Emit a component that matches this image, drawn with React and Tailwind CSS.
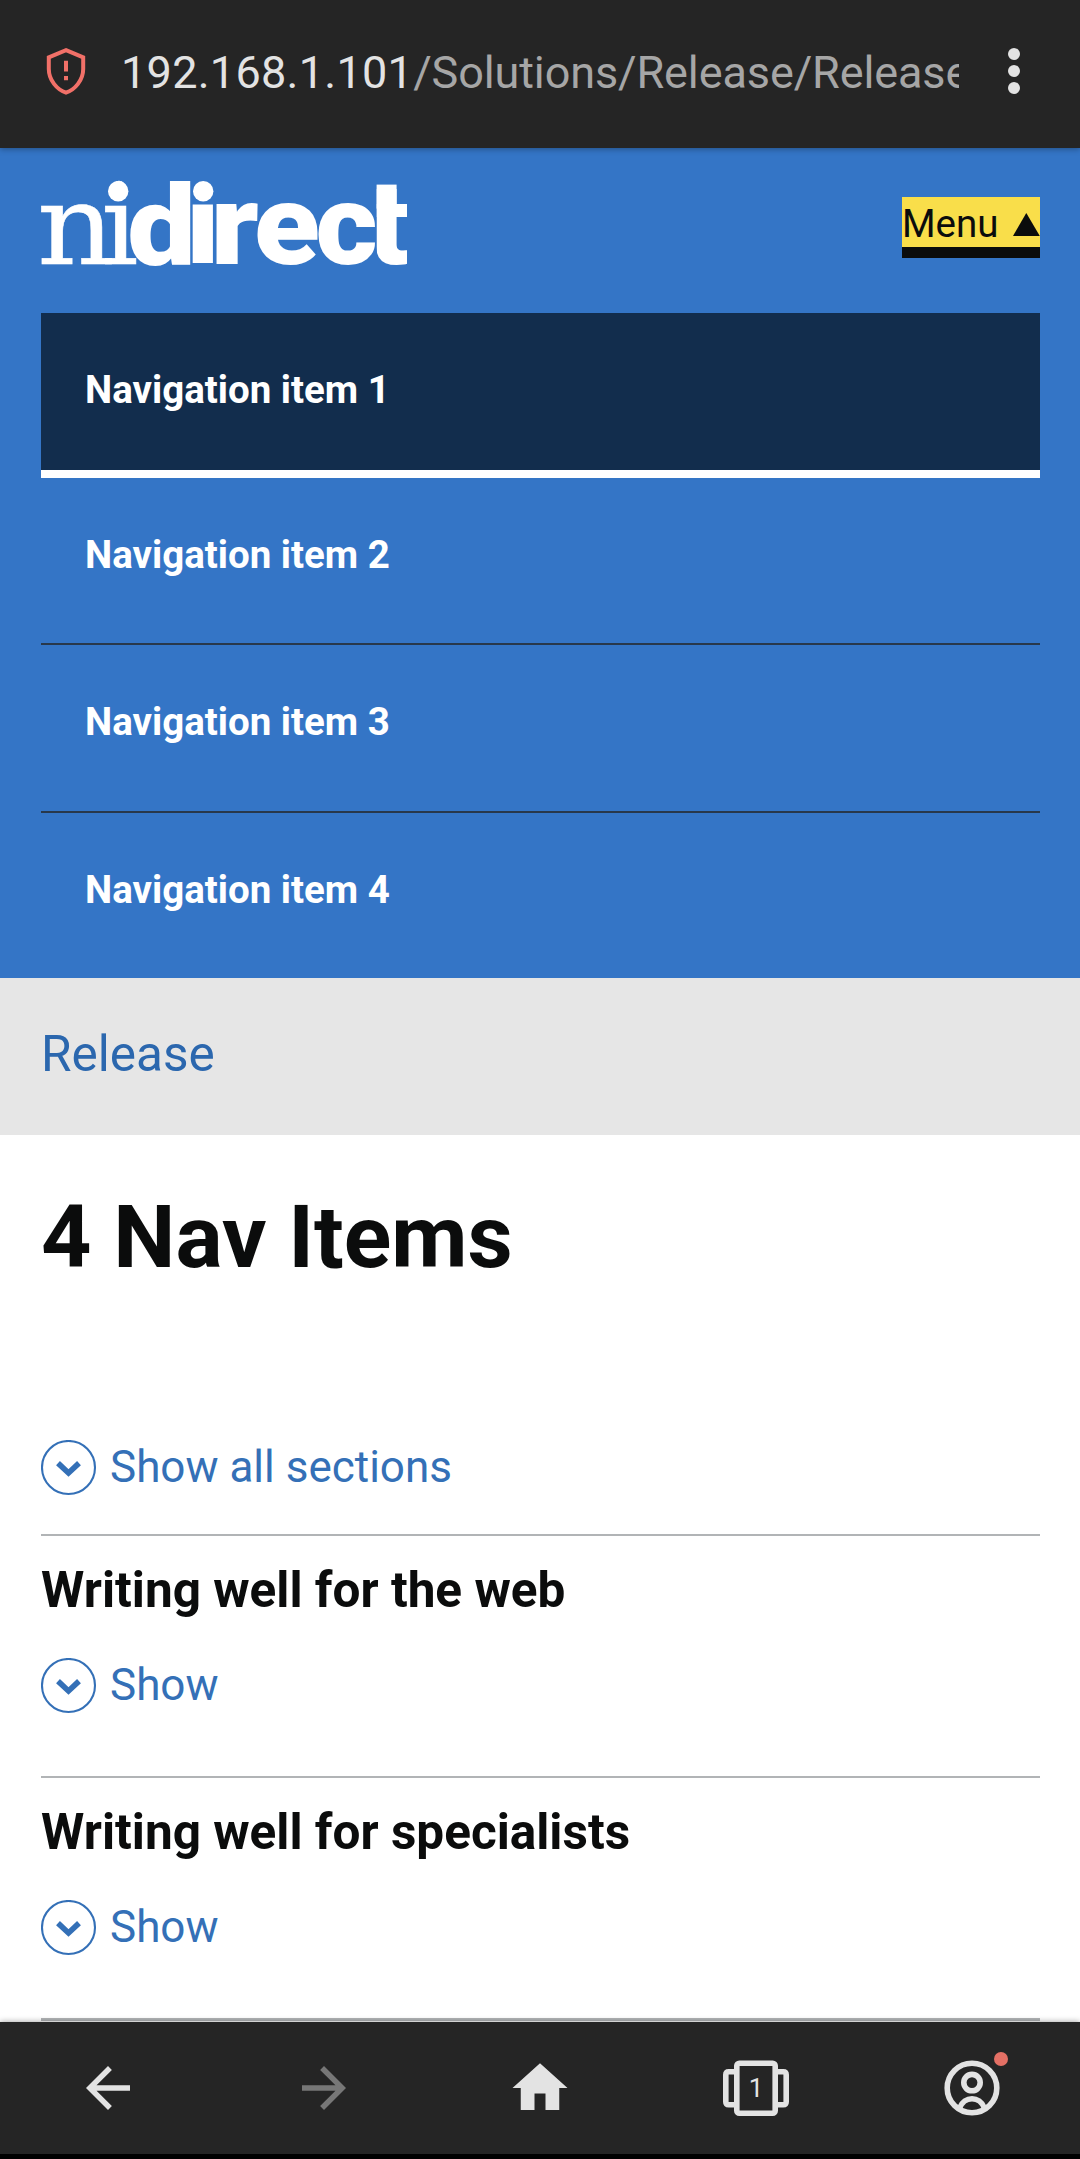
const navItems = ["Navigation item 1", "Navigation item 2", "Navigation item 3", "Navigation item 4"];

const sections = ["Writing well for the web", "Writing well for specialists"];

function ShieldIcon() {
  return (
    <svg className="block h-[66px] w-[66px] shrink-0" viewBox="0 0 66 66" fill="none">
      <path
        d="M33 12.2 L50.2 19.3 V31 C50.2 42 42 51.8 33 54.6 C24 51.8 15.8 42 15.8 31 V19.3 Z"
        stroke="#f17068"
        strokeWidth="4"
      />
      <path d="M33 22.8 V33.4 M33 38 V42.2" stroke="#f17068" strokeWidth="4" />
    </svg>
  );
}

function Logo() {
  return (
    <svg className="block h-[92px] w-[372px]" viewBox="38 178 372 92" fill="#ffffff">
      <defs>
        <clipPath id="logo-stem">
          <rect x="190" y="204.5" width="26" height="64" />
        </clipPath>
        <clipPath id="logo-tail">
          <rect x="376.6" y="181" width="30.4" height="88" />
        </clipPath>
      </defs>
      <g fontFamily="'DejaVu Serif', serif" fontSize="112" stroke="#ffffff" strokeWidth="0.5">
        <text transform="translate(37.1 264) scale(1.08 1)">n</text>
        <text transform="translate(100.9 264) scale(1.05 1)">i</text>
      </g>
      <circle cx="118.2" cy="191.3" r="10.2" />
      <g fontFamily="Roboto, sans-serif" fontSize="113" fontWeight="900">
        <text transform="translate(127.2 264) scale(1.08 0.985)">d</text>
        <g clipPath="url(#logo-stem)">
          <text transform="translate(186.1 264) scale(1.08 1)">i</text>
        </g>
        <text transform="translate(210.4 264) scale(1.13 1)">r</text>
        <text transform="translate(254.1 264) scale(1.07 1)">e</text>
        <text transform="translate(315.5 264) scale(1.06 1)">c</text>
        <g clipPath="url(#logo-tail)">
          <text transform="translate(367.6 264) scale(1.08 1)">t</text>
        </g>
      </g>
      <circle cx="203.2" cy="191.3" r="10.2" />
      <rect x="376.6" y="184.6" width="20" height="24" />
    </svg>
  );
}

function ChevronCircle() {
  return (
    <svg className="block h-[56px] w-[56px] shrink-0" viewBox="0 0 56 56" fill="none" stroke="#3470b7">
      <circle cx="27.5" cy="27.5" r="26.5" strokeWidth="2.1" />
      <path d="M17 23.1 L27.5 33 L38 23.1" strokeWidth="5.6" />
    </svg>
  );
}

function ShowToggle({ label }) {
  return (
    <button className="flex h-[56px] items-start text-[44px] leading-[54px] text-[#3470b7]">
      <ChevronCircle />
      <span className="pl-[13px]">{label}</span>
    </button>
  );
}

function AddressBar() {
  return (
    <div className="relative z-10 flex h-[148px] items-center bg-[#252525] pb-[6px] pl-[33px] shadow-[0_1px_6px_rgba(0,0,0,0.35)]">
      <ShieldIcon />
      <div className="ml-[22px] w-[838px] overflow-hidden whitespace-nowrap pt-[4px] text-[45px] leading-[56px] tracking-[-0.12px] text-[#a6a6a6]">
        <span className="tracking-[0.28px] text-[#e3e3e3]">192.168.1.101</span>/Solutions/Release/Release
      </div>
      <div className="ml-[49px] flex flex-col gap-[5.3px]">
        <span className="size-[11.5px] rounded-full bg-[#e3e3e3]" />
        <span className="size-[11.5px] rounded-full bg-[#e3e3e3]" />
        <span className="size-[11.5px] rounded-full bg-[#e3e3e3]" />
      </div>
    </div>
  );
}

function Header() {
  return (
    <header className="h-[830px] bg-[#3475c6] pl-[41px] pr-[40px]">
      <div className="flex h-[165px] items-start justify-between">
        <div className="-ml-[3px] pt-[30px]">
          <Logo />
        </div>
        <button className="mt-[49.4px] flex h-[61px] w-[138px] items-start justify-between border-b-[11px] border-[#0b0c0c] bg-[#f9de4a] text-[38.5px] leading-[53px] text-[#0b0c0c]">
          <span>Menu</span>
          <svg className="mt-[16px] block h-[23px] w-[27px]" viewBox="0 0 27 23" fill="#0b0c0c">
            <path d="M13.3 0 L26.8 23 H0 Z" />
          </svg>
        </button>
      </div>
      <nav className="font-bold text-[38.5px] leading-[46px] text-white">
        {navItems.map((item, i) => (
          <a
            key={item}
            className={
              i === 0
                ? "block h-[165px] border-b-[8px] border-white bg-[#122d4d] pl-[44px] pt-[54px]"
                : i < 3
                  ? "block h-[167.4px] border-b-[2.6px] border-[#28384b] pl-[44px] pt-[54px]"
                  : "block h-[165px] pl-[44px] pt-[54px]"
            }
          >
            {item}
          </a>
        ))}
      </nav>
    </header>
  );
}

function BottomBar() {
  return (
    <div className="relative z-10 h-[137px] border-b-[5px] border-black bg-[#252525] shadow-[0_0_6px_rgba(0,0,0,0.4)]">
      <div className="grid h-[132px] grid-cols-5 place-items-center text-[#e3e3e3]">
        <svg className="size-[66px]" viewBox="0 0 24 24" fill="currentColor">
          <path d="M20 11H7.83l5.59-5.59L12 4l-8 8 8 8 1.41-1.41L7.83 13H20v-2z" />
        </svg>
        <svg className="size-[66px] text-[#777777]" viewBox="0 0 24 24" fill="currentColor">
          <path d="M12 4l-1.41 1.41L16.17 11H4v2h12.17l-5.58 5.59L12 20l8-8z" />
        </svg>
        <svg className="size-[66px]" viewBox="0 0 24 24" fill="currentColor">
          <path d="M10 20v-6h4v6h5v-8h3L12 3 2 12h3v8z" />
        </svg>
        <div className="grid place-items-center">
          <svg className="col-start-1 row-start-1 h-[66px] w-[68px]" viewBox="0 0 68 66" fill="none" stroke="currentColor" strokeWidth="5.6">
            <rect x="14.8" y="8.2" width="38.4" height="50" rx="2.5" />
            <path d="M12 16.8 H6.8 Q3.8 16.8 3.8 19.8 V46.8 Q3.8 49.8 6.8 49.8 H12 M56 16.8 H61.2 Q64.2 16.8 64.2 19.8 V46.8 Q64.2 49.8 61.2 49.8 H56" />
          </svg>
          <span className="col-start-1 row-start-1 text-[26px] leading-none">1</span>
        </div>
        <div className="relative size-[66px]">
          <svg className="size-[66px]" viewBox="0 0 66 66" fill="none" stroke="currentColor" strokeWidth="5.6">
            <circle cx="33" cy="33" r="24.8" />
            <circle cx="33" cy="27.6" r="8.2" />
            <path d="M20.6 53 C23 47 28 43.8 33 43.8 C38 43.8 43 47 45.4 53" />
          </svg>
          <span className="absolute -top-[3px] left-[54.8px] size-[14px] rounded-full bg-[#e47065]" />
        </div>
      </div>
    </div>
  );
}

export default function App() {
  return (
    <div className="flex h-[2159px] w-[1080px] flex-col overflow-hidden bg-white font-['Roboto',sans-serif] text-[#0b0c0c]">
      <AddressBar />
      <Header />
      <div className="h-[157px] bg-[#e6e6e6] px-[41px] pt-[46px] text-[49.5px] leading-[60px] text-[#2b67ae]">
        Release
      </div>
      <main className="h-[887px] overflow-hidden pl-[41px] pr-[40px]">
        <h1 className="pt-[52px] text-[88px] font-bold leading-[100px]">4 Nav Items</h1>
        <div className="pt-[153px]">
          <ShowToggle label="Show all sections" />
        </div>
        <div className="pt-[38px]">
          {sections.map((title) => (
            <section key={title} className="h-[242.2px] border-t-[2.4px] border-[#b1b4b6] pt-[24px]">
              <h2 className="text-[49.5px] font-bold leading-[60px]">{title}</h2>
              <div className="pt-[38px]">
                <ShowToggle label="Show" />
              </div>
            </section>
          ))}
          <div className="h-[2.4px] bg-[#b1b4b6]" />
        </div>
      </main>
      <BottomBar />
    </div>
  );
}
